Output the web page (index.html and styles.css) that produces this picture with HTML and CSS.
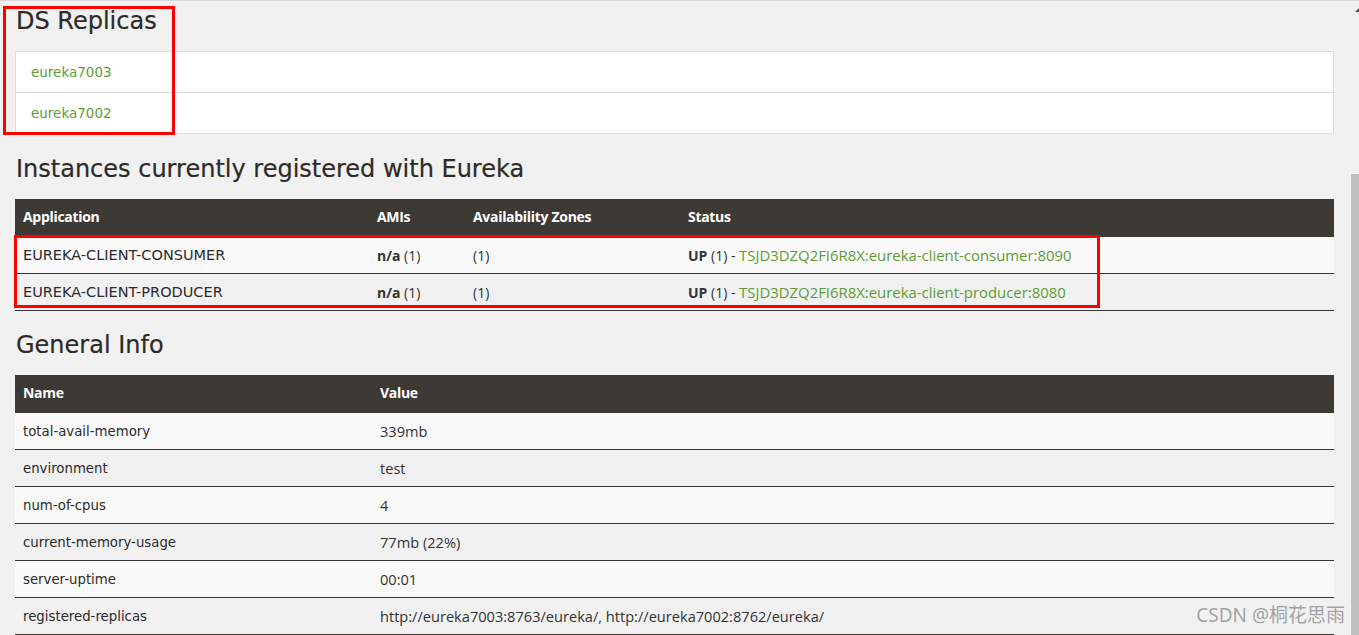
FILE: index.html
```html
<!DOCTYPE html>
<html lang="en">
<head>
<meta charset="utf-8">
<title>Eureka</title>
<link rel="stylesheet" href="styles.css">
</head>
<body>
<div class="page">
  <div class="main">
    <h2 class="heading first">DS Replicas</h2>
    <ul class="replicas">
      <li><a href="#">eureka7003</a></li>
      <li><a href="#">eureka7002</a></li>
    </ul>

    <h2 class="heading">Instances currently registered with Eureka</h2>
    <table class="grid instances">
      <colgroup>
        <col class="c-app"><col class="c-ami"><col class="c-zone"><col>
      </colgroup>
      <thead>
        <tr><th>Application</th><th>AMIs</th><th>Availability Zones</th><th>Status</th></tr>
      </thead>
      <tbody>
        <tr>
          <td class="app">EUREKA-CLIENT-CONSUMER</td>
          <td><b>n/a</b> (1)</td>
          <td>(1)</td>
          <td><b>UP</b> (1) - <a class="inst" href="#">TSJD3DZQ2FI6R8X:eureka-client-consumer:8090</a></td>
        </tr>
        <tr>
          <td class="app">EUREKA-CLIENT-PRODUCER</td>
          <td><b>n/a</b> (1)</td>
          <td>(1)</td>
          <td><b>UP</b> (1) - <a class="inst" href="#">TSJD3DZQ2FI6R8X:eureka-client-producer:8080</a></td>
        </tr>
      </tbody>
    </table>

    <h2 class="heading info-heading">General Info</h2>
    <table class="grid info">
      <colgroup>
        <col class="c-name"><col>
      </colgroup>
      <thead>
        <tr><th>Name</th><th>Value</th></tr>
      </thead>
      <tbody>
        <tr><td class="key">total-avail-memory</td><td class="val">339mb</td></tr>
        <tr><td class="key">environment</td><td class="val">test</td></tr>
        <tr><td class="key">num-of-cpus</td><td class="val">4</td></tr>
        <tr><td class="key">current-memory-usage</td><td class="val">77mb (22%)</td></tr>
        <tr><td class="key">server-uptime</td><td class="val">00:01</td></tr>
        <tr><td class="key">registered-replicas</td><td class="val">http://eureka7003:8763/eureka/, http://eureka7002:8762/eureka/</td></tr>
      </tbody>
    </table>
  </div>
  <div class="scrollbar">
    <div class="arrow"></div>
    <div class="thumb"></div>
  </div>
</div>

<div class="mark mark-replicas"></div>
<div class="mark mark-instances"></div>
<div class="watermark">CSDN @桐花思雨</div>
</body>
</html>
```

FILE: styles.css
```css
html, body {
  margin: 0;
  padding: 0;
  height: 100%;
  overflow: hidden;
}

body {
  background: #f1f1f1;
  color: #333;
  font-family: "Open Sans", "Liberation Sans", sans-serif;
  font-size: 14px;
  position: relative;
}

.page {
  display: flex;
  border-top: 1px solid #d9d9d9;
  height: 634px;
}

.main {
  flex: 1;
  padding: 0 17px 0 15px;
  min-width: 0;
}

.heading {
  font-family: "DejaVu Sans", sans-serif;
  font-weight: normal;
  font-size: 24px;
  line-height: 28px;
  color: #2d2a27;
  margin: 21px 0 16px 1px;
  -webkit-text-stroke: 0.2px #2d2a27;
}

.heading.first {
  margin-top: 6px;
  margin-bottom: 16px;
}

.heading.info-heading {
  margin-top: 20px;
  margin-bottom: 16px;
}

.replicas {
  list-style: none;
  margin: 0;
  padding: 0;
  background: #fff;
  border: 1px solid #dddddd;
}

.replicas li {
  height: 40px;
  display: flex;
  align-items: center;
  padding-left: 15px;
  font-family: "DejaVu Sans", sans-serif;
  font-size: 13.5px;
}

.replicas li + li {
  border-top: 1px solid #dddddd;
}

a {
  color: #5e9d36;
  text-decoration: none;
}

.grid {
  width: 100%;
  border-collapse: collapse;
  table-layout: fixed;
}

.grid th {
  background: #3d3934;
  color: #fff;
  font-weight: 700;
  font-size: 14px;
  text-align: left;
  height: 35px;
  padding: 0 8px 3px;
  letter-spacing: -0.3px;
}

.grid td {
  height: 36px;
  padding: 0 8px;
  border-bottom: 1px solid #3a3632;
  white-space: nowrap;
}

.grid tbody tr:nth-child(odd) td {
  background: #f9f9f9;
}

.grid tbody tr:nth-child(even) td {
  background: #f1f1f1;
}

.grid b {
  font-weight: 700;
}

.c-app { width: 354px; }
.c-ami { width: 96px; }
.c-zone { width: 215px; }
.c-name { width: 357px; }

.app {
  font-family: "DejaVu Sans", sans-serif;
  font-size: 14.5px;
  color: #2b2b2b;
}

.key {
  font-family: "DejaVu Sans", sans-serif;
  font-size: 13.3px;
  color: #2b2b2b;
}

.val {
  font-size: 14.6px;
}

.inst {
  font-size: 14.9px;
}

.scrollbar {
  width: 8px;
  display: flex;
  flex-direction: column;
  align-items: flex-end;
}

.arrow {
  margin-top: 7px;
  width: 0;
  height: 0;
  border-left: 4px solid transparent;
  border-bottom: 4px solid #505050;
}

.thumb {
  margin-top: 162px;
  width: 8px;
  flex: 1;
  background: #c1c1c1;
}

.mark {
  position: absolute;
  border: 3px solid #ff0000;
  box-sizing: border-box;
}

.mark-replicas {
  left: 3px;
  top: 6px;
  width: 172px;
  height: 129px;
}

.mark-instances {
  left: 14px;
  top: 235px;
  width: 1086px;
  height: 73px;
}

.watermark {
  position: absolute;
  right: 14px;
  top: 602px;
  font-family: "Noto Sans", "Noto Sans CJK SC", sans-serif;
  font-size: 19px;
  line-height: 26px;
  color: rgba(135, 135, 135, 0.75);
}
```
